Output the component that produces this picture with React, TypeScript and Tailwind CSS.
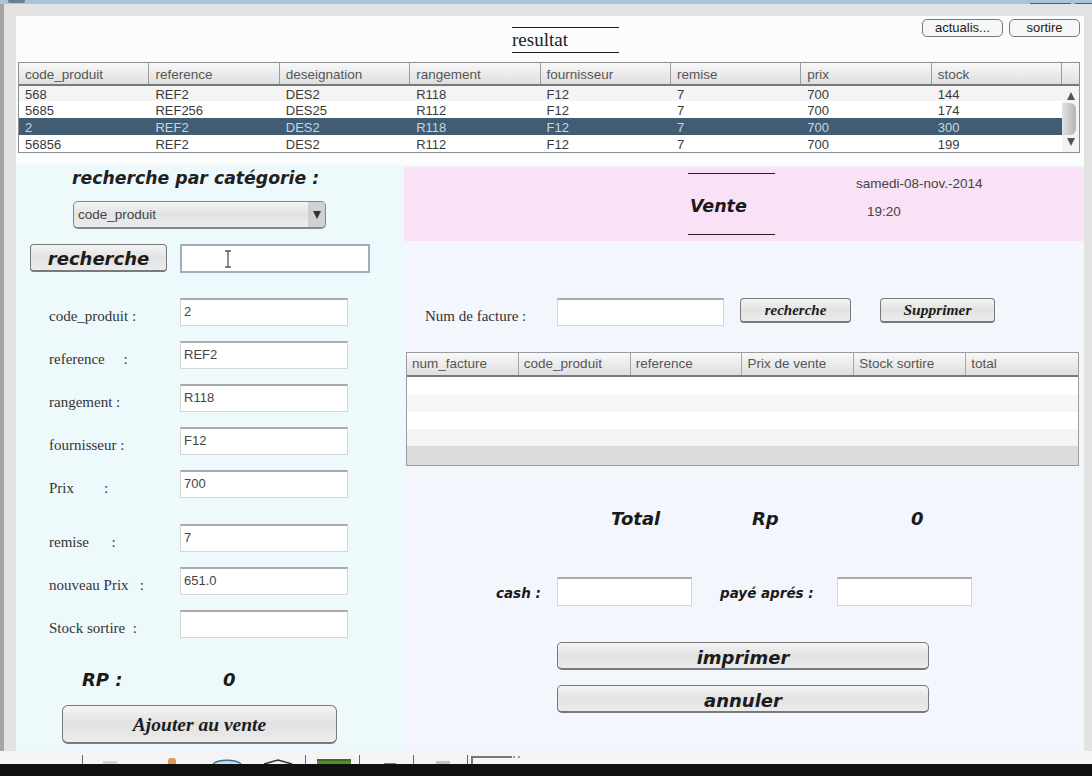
const serif = "font-['Liberation_Serif',serif]";
const heavy = "font-['DejaVu_Sans',sans-serif] font-bold italic";

const stockRows = [
  ["568", "REF2", "DES2", "R118", "F12", "7", "700", "144"],
  ["5685", "REF256", "DES25", "R112", "F12", "7", "700", "174"],
  ["2", "REF2", "DES2", "R118", "F12", "7", "700", "300"],
  ["56856", "REF2", "DES2", "R112", "F12", "7", "700", "199"],
];
const stockCols = ["code_produit", "reference", "deseignation", "rangement", "fournisseur", "remise", "prix", "stock"];
const factureCols = ["num_facture", "code_produit", "reference", "Prix de vente", "Stock sortire", "total"];

const fields = [
  { label: "code_produit :", value: "2", mt: "mt-0" },
  { label: "reference     :", value: "REF2", mt: "mt-[15px]" },
  { label: "rangement :", value: "R118", mt: "mt-[15px]" },
  { label: "fournisseur :", value: "F12", mt: "mt-[15px]" },
  { label: "Prix        :", value: "700", mt: "mt-[15px]" },
  { label: "remise      :", value: "7", mt: "mt-[26px]" },
  { label: "nouveau Prix   :", value: "651.0", mt: "mt-[15px]" },
  { label: "Stock sortire  :", value: "", mt: "mt-[15px]" },
];

function GrayButton({ className, children }: { className: string; children: React.ReactNode }) {
  return (
    <div className={`flex items-center justify-center rounded-[4px] border border-[#77797b] border-b-2 bg-gradient-to-b from-[#f4f4f4] via-[#e2e2e2] to-[#ececec] text-[#1c1c1c] ${className}`}>
      {children}
    </div>
  );
}

function TextBox({ className, value = "" }: { className: string; value?: string }) {
  return (
    <div className={`border border-[#d4d6d8] border-t-2 border-t-[#a9abad] bg-white pl-[3px] pt-[5px] text-[13px] leading-[14px] text-[#444] font-['Liberation_Sans',sans-serif] ${className}`}>
      {value}
    </div>
  );
}

export default function App() {
  return (
    <div className="flex h-[776px] w-[1092px] flex-col overflow-hidden bg-[#101010] font-['Liberation_Sans',sans-serif]">
      {/* window title strip */}
      <div className="flex h-[4px] shrink-0 bg-[#a9c3d8]">
        <div className="ml-[8px] h-[3px] w-[17px] rounded-b-[2px] bg-[#6d7f8f]" />
        <div className="ml-auto h-[1px] w-[41px] self-end bg-[#55606a]" />
        <div className="ml-[4px] h-[1px] w-[17px] self-end bg-[#55606a]" />
      </div>

      <div className="flex h-[747px] shrink-0 bg-[#e2e2e2]">
        <div className="h-full w-[4px] bg-[#a4a4a4]" />
        <div className="ml-[12px] mt-[12px] flex h-[735px] w-[1068px] flex-col">
          {/* resultat */}
          <div className="h-[149px] bg-[#fbfcfd]">
            <div className="flex h-[46px]">
              <div className={`ml-[496px] mt-[11px] flex h-[26px] w-[107px] items-center border-y border-[#222] text-[19px] text-[#222] ${serif}`}>
                resultat
              </div>
              <div className="ml-auto mr-[4px] mt-[3px] flex h-[18px] gap-[6px] text-[13px] text-[#333]">
                <GrayButton className="w-[81px] !border-b !bg-none !bg-[#f6f6f6] rounded-[5px]">actualis...</GrayButton>
                <GrayButton className="w-[71px] !border-b !bg-none !bg-[#f6f6f6] rounded-[5px]">sortire</GrayButton>
              </div>
            </div>
            <div className="ml-[2px] h-[91px] w-[1062px] border border-[#8d8f91] text-[13px] leading-[17px] text-[#3a3a3a]">
              <div className="flex h-[23px] border-b-2 border-[#77797b] bg-gradient-to-b from-[#f8f8f8] to-[#dfdfdf] text-[13.5px]">
                {stockCols.map((c) => (
                  <div key={c} className="flex h-full w-[130.4px] items-center border-r border-[#9a9c9e] pl-[6px] pt-[1px] text-[#555]">{c}</div>
                ))}
                <div className="flex-1" />
              </div>
              <div className="flex">
                <div className="flex-1">
                  {stockRows.map((row, i) => (
                    <div key={row[0]} className={`flex ${i === 0 ? "h-[15px] bg-[#f4f4f4] leading-[15px]" : "h-[17px]"} ${i === 2 ? "bg-[#405d74] text-[#c4d6e4]" : ""} ${i === 1 || i === 3 ? "bg-white" : ""}`}>
                      {row.map((v, j) => (
                        <div key={j} className="w-[130.4px] pl-[6px] pt-[1px]">{v}</div>
                      ))}
                    </div>
                  ))}
                </div>
                <div className="flex h-[66px] w-[17px] flex-col items-center bg-[#f4f4f4]">
                  <svg viewBox="0 0 8 8" className="mt-[6px] h-[8px] w-[8px]"><path d="M4 0L8 8H0Z" fill="#555" /></svg>
                  <div className="mt-[3px] h-[32px] w-[14px] self-start rounded-r-[6px] bg-gradient-to-r from-[#e4e4e4] to-[#b4b4b4]" />
                  <svg viewBox="0 0 8 8" className="mt-[3px] h-[8px] w-[8px]"><path d="M4 8L8 0H0Z" fill="#555" /></svg>
                </div>
              </div>
            </div>
          </div>

          <div className="flex h-[586px]">
            {/* left column */}
            <div className="flex w-[388px] flex-col bg-[#eef9fc] pl-[14px]">
              <div className={`ml-[42px] mt-[1px] h-[27px] whitespace-nowrap text-[17.3px] leading-[25px] text-[#202020] ${heavy}`}>recherche par catégorie :</div>
              <GrayButton className="ml-[43px] mt-[8px] h-[28px] w-[253px] !justify-start overflow-hidden rounded-[5px] border-[#85878a] text-[13.5px] text-[#444]">
                <span className="ml-[4px] flex-1 pt-[1px]">code_produit</span>
                <span className="flex h-full w-[17px] items-center justify-center bg-[#cfd0d2]">
                  <svg viewBox="0 0 8 8" className="h-[8px] w-[8px]"><path d="M4 8L8 0H0Z" fill="#333" /></svg>
                </span>
              </GrayButton>
              <div className="mt-[15px] flex h-[29px]">
                <GrayButton className={`h-[28px] w-[137px] pt-[2px] text-[18px] ${heavy}`}>recherche</GrayButton>
                <div className="ml-[13px] flex h-[29px] w-[190px] items-center border-2 border-[#9fb0bd] bg-white pl-[41px]">
                  <svg viewBox="0 0 10 18" className="h-[18px] w-[10px]"><path d="M2 1h6M5 1v16M2 17h6" fill="none" stroke="#555" strokeWidth="1.3" /></svg>
                </div>
              </div>
              <div className="mt-[25px]">
                {fields.map((f) => (
                  <div key={f.label} className={`flex h-[28px] ${f.mt}`}>
                    <div className={`ml-[19px] w-[131px] whitespace-pre pt-[9px] text-[15px] leading-[18px] text-[#333] ${serif}`}>{f.label}</div>
                    <TextBox className="h-[28px] w-[168px]" value={f.value} />
                  </div>
                ))}
              </div>
              <div className={`ml-[52px] mt-[27px] flex h-[24px] items-center pt-[4px] text-[18px] text-[#1a1a1a] ${heavy}`}>
                <span className="w-[141px]">RP :</span>
                <span>0</span>
              </div>
              <GrayButton className={`ml-[32px] mt-[16px] h-[39px] w-[275px] rounded-[6px] pt-[2px] text-[19.5px] font-bold italic ${serif}`}>Ajouter au vente</GrayButton>
            </div>

            {/* right column */}
            <div className="w-[680px] bg-[#f3f6fc]">
              <div className="mt-[2px] flex h-[74px] bg-[#f9e1f6]">
                <div className="ml-[284px] flex h-full w-[87px] flex-col">
                  <div className="mt-[6px] h-[1px] bg-[#222]" />
                  <div className={`flex flex-1 items-center pl-[2px] pt-[5px] text-[17.5px] text-[#1a1a1a] ${heavy}`}>Vente</div>
                  <div className="mb-[6px] h-[1px] bg-[#222]" />
                </div>
                <div className="ml-[81px] text-[13.5px] text-[#444]">
                  <div className="mt-[9px] leading-[15px]">samedi-08-nov.-2014</div>
                  <div className="ml-[11px] mt-[13px] leading-[15px]">19:20</div>
                </div>
              </div>

              <div className="mt-[57px] flex h-[28px]">
                <div className={`ml-[21px] w-[132px] pt-[9px] text-[15px] leading-[18px] text-[#333] ${serif}`}>Num de facture :</div>
                <TextBox className="h-[28px] w-[167px]" />
                <GrayButton className={`ml-[16px] h-[25px] w-[111px] text-[15px] font-bold italic ${serif}`}>recherche</GrayButton>
                <GrayButton className={`ml-[29px] h-[25px] w-[115px] text-[15.5px] font-bold italic ${serif}`}>Supprimer</GrayButton>
              </div>

              <div className="ml-[2px] mt-[26px] flex h-[114px] w-[673px] flex-col border border-[#9a9c9e] text-[13.5px] text-[#555]">
                <div className="flex h-[24px] shrink-0 border-b-2 border-[#77797b] bg-gradient-to-b from-[#f8f8f8] to-[#dfdfdf]">
                  {factureCols.map((c) => (
                    <div key={c} className="flex h-full w-[112px] items-center border-r border-[#a4a6a8] pl-[5px] last:border-r-0">{c}</div>
                  ))}
                </div>
                <div className="h-[18px] bg-white" />
                <div className="h-[17px] bg-[#f6f6f6]" />
                <div className="h-[17px] bg-white" />
                <div className="h-[17px] bg-[#f5f5f5]" />
                <div className="flex-1 bg-[#dcdcdc]" />
              </div>

              <div className={`mt-[38px] flex h-[26px] items-center pt-[3px] text-[18px] text-[#1a1a1a] ${heavy}`}>
                <span className="ml-[207px] w-[141px]">Total</span>
                <span className="w-[159px]">Rp</span>
                <span>0</span>
              </div>

              <div className={`mt-[47px] flex h-[29px] items-center text-[13.5px] text-[#1a1a1a] ${heavy}`}>
                <span className="w-[153px] pl-[92px] pt-[3px]">cash :</span>
                <TextBox className="h-[29px] w-[135px]" />
                <span className="ml-[28px] w-[117px] whitespace-nowrap pt-[3px]">payé aprés :</span>
                <TextBox className="h-[29px] w-[135px]" />
              </div>

              <GrayButton className={`ml-[153px] mt-[36px] h-[28px] w-[372px] rounded-[5px] pt-[4px] text-[18px] ${heavy}`}>imprimer</GrayButton>
              <GrayButton className={`ml-[153px] mt-[15px] h-[28px] w-[372px] rounded-[5px] pt-[4px] text-[18px] ${heavy}`}>annuler</GrayButton>
            </div>
          </div>
        </div>
      </div>

      {/* taskbar, cut off by the black band */}
      <div className="flex h-[13px] shrink-0 items-end bg-[#f4f4f4]">
        <div className="ml-[82px] h-[9px] w-[1px] bg-[#666]" />
        <div className="ml-[20px] h-[3px] w-[14px] bg-[#d8d4cc]" />
        <div className="ml-[51px] h-[6px] w-[8px] rounded-t-[3px] bg-[#d99a55]" />
        <svg viewBox="0 0 30 5" className="ml-[36px] h-[5px] w-[30px]"><path d="M1 5C6 0 24 0 29 5" fill="#bfe0ee" stroke="#3d6f8a" strokeWidth="1.5" /></svg>
        <svg viewBox="0 0 30 5" className="ml-[21px] h-[5px] w-[30px]"><path d="M1 5L15 1L29 5" fill="none" stroke="#333" strokeWidth="1.6" /></svg>
        <div className="ml-[12px] h-[9px] w-[1px] bg-[#666]" />
        <div className="ml-[11px] h-[5px] w-[34px] border-t-2 border-[#3f6a1e] bg-[#5b8a2c]" />
        <div className="ml-[8px] h-[9px] w-[1px] bg-[#666]" />
        <div className="ml-[24px] h-[1px] w-[12px] bg-[#777]" />
        <div className="ml-[17px] h-[9px] w-[1px] bg-[#666]" />
        <div className="ml-[22px] h-[3px] w-[14px] bg-[#c4c4c4]" />
        <div className="ml-[17px] h-[9px] w-[1px] bg-[#666]" />
        <div className="ml-[3px] h-[8px] w-[41px] border-l-2 border-t-2 border-[#777]" />
        <div className="mb-[6px] ml-[1px] h-[2px] w-[7px] border-x-2 border-[#999]" />
      </div>
    </div>
  );
}
